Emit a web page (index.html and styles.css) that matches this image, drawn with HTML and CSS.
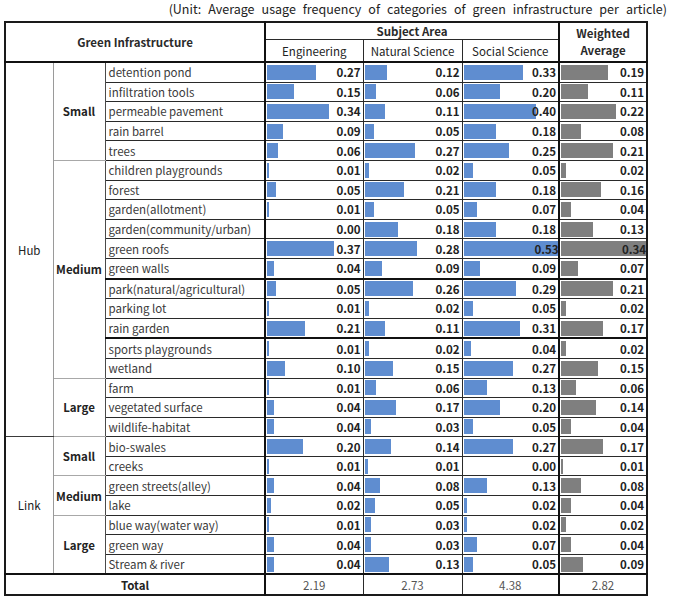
FILE: index.html
```html
<!DOCTYPE html>
<html>
<head>
<meta charset="utf-8">
<link rel="stylesheet" href="styles.css">
</head>
<body>
<div class="page">
<p class="unit">(Unit: Average usage frequency of categories of green infrastructure per article)</p>
<table class="gi">
<colgroup>
<col class="c-cat"><col class="c-size"><col class="c-name"><col class="c-eng"><col class="c-nat"><col class="c-soc"><col class="c-wa">
</colgroup>
<thead>
<tr class="h1">
<th colspan="3" rowspan="2" class="gi-head">Green Infrastructure</th>
<th colspan="3" class="subj">Subject Area</th>
<th rowspan="2" class="wa-head">Weighted<br>Average</th>
</tr>
<tr class="h2">
<th class="sub">Engineering</th>
<th class="sub">Natural Science</th>
<th class="sub">Social Science</th>
</tr>
</thead>
<tbody>
<tr>
<td rowspan="19" class="cat">Hub</td>
<td rowspan="5" class="size">Small</td>
<td class="name">detention pond</td>
<td class="v"><div class="dbar"><span class="bar" style="width:49px"></span><span class="num">0.27</span></div></td>
<td class="v"><div class="dbar"><span class="bar" style="width:22px"></span><span class="num">0.12</span></div></td>
<td class="v"><div class="dbar"><span class="bar" style="width:59px"></span><span class="num">0.33</span></div></td>
<td class="v wa"><div class="dbar"><span class="bar" style="width:47px"></span><span class="num">0.19</span></div></td>
</tr>
<tr>
<td class="name">infiltration tools</td>
<td class="v"><div class="dbar"><span class="bar" style="width:27px"></span><span class="num">0.15</span></div></td>
<td class="v"><div class="dbar"><span class="bar" style="width:11px"></span><span class="num">0.06</span></div></td>
<td class="v"><div class="dbar"><span class="bar" style="width:36px"></span><span class="num">0.20</span></div></td>
<td class="v wa"><div class="dbar"><span class="bar" style="width:27px"></span><span class="num">0.11</span></div></td>
</tr>
<tr>
<td class="name">permeable pavement</td>
<td class="v"><div class="dbar"><span class="bar" style="width:62px"></span><span class="num">0.34</span></div></td>
<td class="v"><div class="dbar"><span class="bar" style="width:20px"></span><span class="num">0.11</span></div></td>
<td class="v"><div class="dbar"><span class="bar" style="width:72px"></span><span class="num">0.40</span></div></td>
<td class="v wa"><div class="dbar"><span class="bar" style="width:55px"></span><span class="num">0.22</span></div></td>
</tr>
<tr>
<td class="name">rain barrel</td>
<td class="v"><div class="dbar"><span class="bar" style="width:16px"></span><span class="num">0.09</span></div></td>
<td class="v"><div class="dbar"><span class="bar" style="width:9px"></span><span class="num">0.05</span></div></td>
<td class="v"><div class="dbar"><span class="bar" style="width:32px"></span><span class="num">0.18</span></div></td>
<td class="v wa"><div class="dbar"><span class="bar" style="width:20px"></span><span class="num">0.08</span></div></td>
</tr>
<tr>
<td class="name">trees</td>
<td class="v"><div class="dbar"><span class="bar" style="width:11px"></span><span class="num">0.06</span></div></td>
<td class="v"><div class="dbar"><span class="bar" style="width:50px"></span><span class="num">0.27</span></div></td>
<td class="v"><div class="dbar"><span class="bar" style="width:45px"></span><span class="num">0.25</span></div></td>
<td class="v wa"><div class="dbar"><span class="bar" style="width:52px"></span><span class="num">0.21</span></div></td>
</tr>
<tr>
<td rowspan="11" class="size">Medium</td>
<td class="name">children playgrounds</td>
<td class="v"><div class="dbar"><span class="bar" style="width:2px"></span><span class="num">0.01</span></div></td>
<td class="v"><div class="dbar"><span class="bar" style="width:4px"></span><span class="num">0.02</span></div></td>
<td class="v"><div class="dbar"><span class="bar" style="width:9px"></span><span class="num">0.05</span></div></td>
<td class="v wa"><div class="dbar"><span class="bar" style="width:5px"></span><span class="num">0.02</span></div></td>
</tr>
<tr>
<td class="name">forest</td>
<td class="v"><div class="dbar"><span class="bar" style="width:9px"></span><span class="num">0.05</span></div></td>
<td class="v"><div class="dbar"><span class="bar" style="width:39px"></span><span class="num">0.21</span></div></td>
<td class="v"><div class="dbar"><span class="bar" style="width:32px"></span><span class="num">0.18</span></div></td>
<td class="v wa"><div class="dbar"><span class="bar" style="width:40px"></span><span class="num">0.16</span></div></td>
</tr>
<tr>
<td class="name">garden(allotment)</td>
<td class="v"><div class="dbar"><span class="bar" style="width:2px"></span><span class="num">0.01</span></div></td>
<td class="v"><div class="dbar"><span class="bar" style="width:9px"></span><span class="num">0.05</span></div></td>
<td class="v"><div class="dbar"><span class="bar" style="width:13px"></span><span class="num">0.07</span></div></td>
<td class="v wa"><div class="dbar"><span class="bar" style="width:10px"></span><span class="num">0.04</span></div></td>
</tr>
<tr>
<td class="name">garden(community/urban)</td>
<td class="v"><div class="dbar"><span class="bar" style="width:0px"></span><span class="num">0.00</span></div></td>
<td class="v"><div class="dbar"><span class="bar" style="width:33px"></span><span class="num">0.18</span></div></td>
<td class="v"><div class="dbar"><span class="bar" style="width:32px"></span><span class="num">0.18</span></div></td>
<td class="v wa"><div class="dbar"><span class="bar" style="width:32px"></span><span class="num">0.13</span></div></td>
</tr>
<tr>
<td class="name">green roofs</td>
<td class="v"><div class="dbar"><span class="bar" style="width:67px"></span><span class="num">0.37</span></div></td>
<td class="v"><div class="dbar"><span class="bar" style="width:52px"></span><span class="num">0.28</span></div></td>
<td class="v"><div class="dbar"><span class="bar" style="width:95px"></span><span class="num">0.53</span></div></td>
<td class="v wa"><div class="dbar"><span class="bar" style="width:85px"></span><span class="num">0.34</span></div></td>
</tr>
<tr class="thick">
<td class="name">green walls</td>
<td class="v"><div class="dbar"><span class="bar" style="width:7px"></span><span class="num">0.04</span></div></td>
<td class="v"><div class="dbar"><span class="bar" style="width:17px"></span><span class="num">0.09</span></div></td>
<td class="v"><div class="dbar"><span class="bar" style="width:16px"></span><span class="num">0.09</span></div></td>
<td class="v wa"><div class="dbar"><span class="bar" style="width:17px"></span><span class="num">0.07</span></div></td>
</tr>
<tr>
<td class="name">park(natural/agricultural)</td>
<td class="v"><div class="dbar"><span class="bar" style="width:9px"></span><span class="num">0.05</span></div></td>
<td class="v"><div class="dbar"><span class="bar" style="width:48px"></span><span class="num">0.26</span></div></td>
<td class="v"><div class="dbar"><span class="bar" style="width:52px"></span><span class="num">0.29</span></div></td>
<td class="v wa"><div class="dbar"><span class="bar" style="width:52px"></span><span class="num">0.21</span></div></td>
</tr>
<tr>
<td class="name">parking lot</td>
<td class="v"><div class="dbar"><span class="bar" style="width:2px"></span><span class="num">0.01</span></div></td>
<td class="v"><div class="dbar"><span class="bar" style="width:4px"></span><span class="num">0.02</span></div></td>
<td class="v"><div class="dbar"><span class="bar" style="width:9px"></span><span class="num">0.05</span></div></td>
<td class="v wa"><div class="dbar"><span class="bar" style="width:5px"></span><span class="num">0.02</span></div></td>
</tr>
<tr class="thick">
<td class="name">rain garden</td>
<td class="v"><div class="dbar"><span class="bar" style="width:38px"></span><span class="num">0.21</span></div></td>
<td class="v"><div class="dbar"><span class="bar" style="width:20px"></span><span class="num">0.11</span></div></td>
<td class="v"><div class="dbar"><span class="bar" style="width:56px"></span><span class="num">0.31</span></div></td>
<td class="v wa"><div class="dbar"><span class="bar" style="width:42px"></span><span class="num">0.17</span></div></td>
</tr>
<tr>
<td class="name">sports playgrounds</td>
<td class="v"><div class="dbar"><span class="bar" style="width:2px"></span><span class="num">0.01</span></div></td>
<td class="v"><div class="dbar"><span class="bar" style="width:4px"></span><span class="num">0.02</span></div></td>
<td class="v"><div class="dbar"><span class="bar" style="width:7px"></span><span class="num">0.04</span></div></td>
<td class="v wa"><div class="dbar"><span class="bar" style="width:5px"></span><span class="num">0.02</span></div></td>
</tr>
<tr>
<td class="name">wetland</td>
<td class="v"><div class="dbar"><span class="bar" style="width:18px"></span><span class="num">0.10</span></div></td>
<td class="v"><div class="dbar"><span class="bar" style="width:28px"></span><span class="num">0.15</span></div></td>
<td class="v"><div class="dbar"><span class="bar" style="width:49px"></span><span class="num">0.27</span></div></td>
<td class="v wa"><div class="dbar"><span class="bar" style="width:37px"></span><span class="num">0.15</span></div></td>
</tr>
<tr>
<td rowspan="3" class="size">Large</td>
<td class="name">farm</td>
<td class="v"><div class="dbar"><span class="bar" style="width:2px"></span><span class="num">0.01</span></div></td>
<td class="v"><div class="dbar"><span class="bar" style="width:11px"></span><span class="num">0.06</span></div></td>
<td class="v"><div class="dbar"><span class="bar" style="width:23px"></span><span class="num">0.13</span></div></td>
<td class="v wa"><div class="dbar"><span class="bar" style="width:15px"></span><span class="num">0.06</span></div></td>
</tr>
<tr>
<td class="name">vegetated surface</td>
<td class="v"><div class="dbar"><span class="bar" style="width:7px"></span><span class="num">0.04</span></div></td>
<td class="v"><div class="dbar"><span class="bar" style="width:31px"></span><span class="num">0.17</span></div></td>
<td class="v"><div class="dbar"><span class="bar" style="width:36px"></span><span class="num">0.20</span></div></td>
<td class="v wa"><div class="dbar"><span class="bar" style="width:35px"></span><span class="num">0.14</span></div></td>
</tr>
<tr>
<td class="name">wildlife-habitat</td>
<td class="v"><div class="dbar"><span class="bar" style="width:7px"></span><span class="num">0.04</span></div></td>
<td class="v"><div class="dbar"><span class="bar" style="width:6px"></span><span class="num">0.03</span></div></td>
<td class="v"><div class="dbar"><span class="bar" style="width:9px"></span><span class="num">0.05</span></div></td>
<td class="v wa"><div class="dbar"><span class="bar" style="width:10px"></span><span class="num">0.04</span></div></td>
</tr>
<tr>
<td rowspan="7" class="cat">Link</td>
<td rowspan="2" class="size">Small</td>
<td class="name">bio-swales</td>
<td class="v"><div class="dbar"><span class="bar" style="width:36px"></span><span class="num">0.20</span></div></td>
<td class="v"><div class="dbar"><span class="bar" style="width:26px"></span><span class="num">0.14</span></div></td>
<td class="v"><div class="dbar"><span class="bar" style="width:49px"></span><span class="num">0.27</span></div></td>
<td class="v wa"><div class="dbar"><span class="bar" style="width:42px"></span><span class="num">0.17</span></div></td>
</tr>
<tr>
<td class="name">creeks</td>
<td class="v"><div class="dbar"><span class="bar" style="width:2px"></span><span class="num">0.01</span></div></td>
<td class="v"><div class="dbar"><span class="bar" style="width:3px"></span><span class="num">0.01</span></div></td>
<td class="v"><div class="dbar"><span class="bar" style="width:0px"></span><span class="num">0.00</span></div></td>
<td class="v wa"><div class="dbar"><span class="bar" style="width:2px"></span><span class="num">0.01</span></div></td>
</tr>
<tr>
<td rowspan="2" class="size">Medium</td>
<td class="name">green streets(alley)</td>
<td class="v"><div class="dbar"><span class="bar" style="width:7px"></span><span class="num">0.04</span></div></td>
<td class="v"><div class="dbar"><span class="bar" style="width:15px"></span><span class="num">0.08</span></div></td>
<td class="v"><div class="dbar"><span class="bar" style="width:23px"></span><span class="num">0.13</span></div></td>
<td class="v wa"><div class="dbar"><span class="bar" style="width:20px"></span><span class="num">0.08</span></div></td>
</tr>
<tr>
<td class="name">lake</td>
<td class="v"><div class="dbar"><span class="bar" style="width:4px"></span><span class="num">0.02</span></div></td>
<td class="v"><div class="dbar"><span class="bar" style="width:10px"></span><span class="num">0.05</span></div></td>
<td class="v"><div class="dbar"><span class="bar" style="width:3px"></span><span class="num">0.02</span></div></td>
<td class="v wa"><div class="dbar"><span class="bar" style="width:10px"></span><span class="num">0.04</span></div></td>
</tr>
<tr>
<td rowspan="3" class="size">Large</td>
<td class="name">blue way(water way)</td>
<td class="v"><div class="dbar"><span class="bar" style="width:2px"></span><span class="num">0.01</span></div></td>
<td class="v"><div class="dbar"><span class="bar" style="width:6px"></span><span class="num">0.03</span></div></td>
<td class="v"><div class="dbar"><span class="bar" style="width:3px"></span><span class="num">0.02</span></div></td>
<td class="v wa"><div class="dbar"><span class="bar" style="width:5px"></span><span class="num">0.02</span></div></td>
</tr>
<tr>
<td class="name">green way</td>
<td class="v"><div class="dbar"><span class="bar" style="width:7px"></span><span class="num">0.04</span></div></td>
<td class="v"><div class="dbar"><span class="bar" style="width:6px"></span><span class="num">0.03</span></div></td>
<td class="v"><div class="dbar"><span class="bar" style="width:13px"></span><span class="num">0.07</span></div></td>
<td class="v wa"><div class="dbar"><span class="bar" style="width:10px"></span><span class="num">0.04</span></div></td>
</tr>
<tr>
<td class="name">Stream &amp; river</td>
<td class="v"><div class="dbar"><span class="bar" style="width:7px"></span><span class="num">0.04</span></div></td>
<td class="v"><div class="dbar"><span class="bar" style="width:24px"></span><span class="num">0.13</span></div></td>
<td class="v"><div class="dbar"><span class="bar" style="width:9px"></span><span class="num">0.05</span></div></td>
<td class="v wa"><div class="dbar"><span class="bar" style="width:22px"></span><span class="num">0.09</span></div></td>
</tr>
</tbody>
<tfoot>
<tr class="total">
<td colspan="3" class="total-label">Total</td>
<td class="tv">2.19</td>
<td class="tv">2.73</td>
<td class="tv">4.38</td>
<td class="tv">2.82</td>
</tr>
</tfoot>
</table>
</div>
</body>
</html>
```
FILE: styles.css
```css
html, body {
  margin: 0;
  padding: 0;
  background: #ffffff;
}

.page {
  width: 675px;
  padding: 1px 0 0 4px;
  font-family: "Noto Sans CJK KR", "Noto Sans", sans-serif;
  color: #333;
}

.unit {
  margin: 0 12px 5px 0;
  text-align: right;
  font-size: 12.5px;
  line-height: 15px;
  word-spacing: 4.2px;
  color: #222;
}

.gi {
  border-collapse: collapse;
  table-layout: fixed;
  width: 642px;
  border: 2px solid #1a1a1a;
  font-size: 11.5px;
}

.c-cat { width: 48px; }
.c-size { width: 52px; }
.c-name { width: 160px; }
.c-eng { width: 98px; }
.c-nat { width: 99px; }
.c-soc { width: 97px; }
.c-wa { width: 88px; }

.gi th, .gi td {
  padding: 0;
  border: 1px solid #2a2a2a;
  line-height: 14px;
  overflow: hidden;
  white-space: nowrap;
}

.gi th {
  font-weight: 700;
  color: #2a2a2a;
}

.h1 th { height: 16px; }
.h2 th { height: 21px; }

.gi-head {
  border-right: 2px solid #111 !important;
  border-bottom: 2px solid #111 !important;
}

.subj {
  border-bottom: 1px solid #2a2a2a;
}

.gi th.sub {
  font-weight: 400;
  color: #222;
  border-bottom: 2px solid #111;
}

.gi th.sub:first-child {
  border-left: 2px solid #111;
}

.wa-head {
  border-left: 2px solid #111 !important;
  border-bottom: 2px solid #111 !important;
  line-height: 17px !important;
  vertical-align: middle;
}

.gi tbody td {
  height: 18.6px;
}

.cat {
  text-align: center;
  color: #222;
  border-color: #9a9a9a !important;
  border-bottom-color: #3a3a3a !important;
}

.size {
  text-align: center;
  font-weight: 700;
  color: #222;
  border-color: #a8a8a8 !important;
  border-right-color: #4a4a4a !important;
}

.name {
  padding-left: 3px !important;
  color: #3a3a3a;
}

.thick td {
  border-bottom: 2px solid #111;
}

.v {
  padding: 0 2px 0 1px !important;
}

.v:nth-child(1 of .v) {
  border-left: 2px solid #111;
}

.wa {
  border-left: 2px solid #111 !important;
}

.dbar {
  display: grid;
  align-items: center;
  height: 18px;
}

.bar {
  grid-area: 1 / 1;
  justify-self: start;
  height: 15px;
  background: #5f8dd0;
}

.wa .bar {
  background: #7f7f7f;
}

.num {
  grid-area: 1 / 1;
  justify-self: end;
  font-weight: 700;
  color: #222;
  position: relative;
}

.total td {
  height: 19px;
  border-top: 2px solid #111;
  text-align: center;
}

.total-label {
  font-weight: 700;
  color: #222;
  border-right: 2px solid #111 !important;
}

.tv {
  color: #555;
  font-size: 11.5px;
}

.tv:last-child {
  border-left: 2px solid #111;
}
```
